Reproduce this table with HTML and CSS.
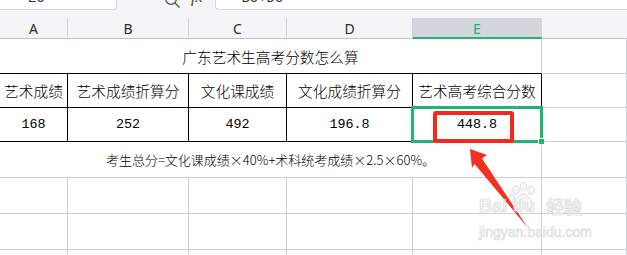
FILE: index.html
```html
<!DOCTYPE html>
<html lang="zh-CN">
<head>
<meta charset="utf-8">
<title>广东艺术生高考分数怎么算</title>
<link rel="stylesheet" href="styles.css">
</head>
<body>
<div class="topbar">
  <div class="namebox"><span>E5</span></div>
  <div class="tools">
    <svg class="search" width="18" height="16" viewBox="0 0 18 16"><circle cx="7" cy="7" r="5.3" fill="none" stroke="#555" stroke-width="1.3"/><line x1="11" y1="11" x2="15" y2="15" stroke="#555" stroke-width="1.4" stroke-linecap="round"/></svg>
    <span class="fx">fx</span>
  </div>
  <div class="formula"><span>=B5+D5</span></div>
</div>
<div class="colheads">
  <div class="ch">A</div>
  <div class="ch">B</div>
  <div class="ch">C</div>
  <div class="ch">D</div>
  <div class="ch sel">E</div>
  <div class="ch end"></div>
</div>
<div class="sheet">
  <div class="c title">广东艺术生高考分数怎么算</div>
  <div class="c"></div>

  <div class="c t">艺术成绩</div>
  <div class="c t">艺术成绩折算分</div>
  <div class="c t">文化课成绩</div>
  <div class="c t">文化成绩折算分</div>
  <div class="c t">艺术高考综合分数</div>
  <div class="c"></div>

  <div class="c t num">168</div>
  <div class="c t num">252</div>
  <div class="c t num">492</div>
  <div class="c t num">196.8</div>
  <div class="c t num">448.8</div>
  <div class="c"></div>

  <div class="c note">考生总分=文化课成绩×40%+术科统考成绩×2.5×60%。</div>
  <div class="c"></div>

  <div class="c"></div><div class="c"></div><div class="c"></div><div class="c"></div><div class="c"></div><div class="c"></div>
  <div class="c"></div><div class="c"></div><div class="c"></div><div class="c"></div><div class="c"></div><div class="c"></div>
  <div class="c"></div><div class="c"></div><div class="c"></div><div class="c"></div><div class="c"></div><div class="c"></div>
</div>

<div class="selbox"></div>
<div class="handle"></div>
<div class="redbox"></div>
<svg class="arrow" width="627" height="255" viewBox="0 0 627 255"><polygon points="470,149 487,155 482,158.5 528,228 474.5,164 472,168" fill="#f4311f"/></svg>

<div class="watermark">
  <div class="wm-top">
    <span class="wm-bai">Bai</span>
    <span class="wm-paw">
      <svg width="30" height="32" viewBox="0 0 30 32"><g fill="#f4f4f4" stroke="#d6d6d6" stroke-width="1"><ellipse cx="8" cy="9" rx="3.2" ry="4.2"/><ellipse cx="15.5" cy="5.5" rx="3.2" ry="4.2"/><ellipse cx="23" cy="9" rx="3.2" ry="4.2"/><ellipse cx="4" cy="17" rx="2.8" ry="3.6"/><path d="M15 13 C20 13 25 21 24 25 C23 29 18 28 15 27 C12 28 7 29 6 25 C5 21 10 13 15 13 Z"/></g></svg>
      <span class="wm-du">du</span>
    </span>
    <span class="wm-jy">经验</span>
  </div>
  <div class="wm-url">jingyan.baidu.com</div>
</div>
</body>
</html>
```

FILE: styles.css
```css
html, body {
  margin: 0;
  padding: 0;
  width: 627px;
  height: 255px;
  overflow: hidden;
  background: #fff;
}
body {
  position: relative;
  font-family: "Noto Sans CJK SC", "Noto Sans", sans-serif;
  color: #000;
}

/* formula bar */
.topbar {
  display: flex;
  height: 10px;
  background: #f4f5f7;
}
.namebox {
  width: 117px;
  box-sizing: border-box;
  background: #fff;
  border-right: 1px solid #d5d8de;
  border-bottom: 1px solid #d5d8de;
  border-bottom-right-radius: 4px;
  position: relative;
  overflow: hidden;
}
.namebox span {
  position: absolute;
  left: 28px;
  top: -10px;
  font-family: "Liberation Mono", monospace;
  font-size: 14px;
  line-height: 16px;
  color: #333;
}
.tools {
  width: 98px;
  position: relative;
  overflow: hidden;
}
.search {
  position: absolute;
  left: 47px;
  top: -8px;
}
.fx {
  position: absolute;
  left: 74px;
  top: -11px;
  font-family: "Liberation Serif", serif;
  font-style: italic;
  font-size: 16px;
  line-height: 16px;
  color: #444;
}
.formula {
  flex: 1;
  box-sizing: border-box;
  background: #fff;
  border-left: 1px solid #d5d8de;
  border-bottom: 1px solid #d5d8de;
  border-bottom-left-radius: 4px;
  position: relative;
  overflow: hidden;
}
.formula span {
  position: absolute;
  left: 17px;
  top: -10px;
  font-family: "Liberation Mono", monospace;
  font-size: 14px;
  line-height: 16px;
  color: #333;
}

/* column headers */
.colheads {
  display: grid;
  grid-template-columns: 68px 121px 98px 126px 129px 1fr;
  grid-template-rows: 20px;
  height: 29px;
  box-sizing: border-box;
  padding-top: 8px;
  background: #f4f5f7;
  border-bottom: 1px solid #bfc3cc;
}
.ch {
  position: relative;
  display: flex;
  align-items: center;
  justify-content: center;
  border-right: 1px solid #cdd0d8;
  font-family: "Noto Sans", sans-serif;
  font-size: 14px;
  color: #2b2b2b;
}
.ch.end {
  border-right: none;
}
.ch.sel {
  background: #d3d6dd;
  color: #23b277;
  border-right-color: #d3d6dd;
}
.ch.sel::after {
  content: "";
  position: absolute;
  left: 0;
  right: -1px;
  bottom: -1px;
  height: 2px;
  background: #21b474;
}

/* sheet grid */
.sheet {
  display: grid;
  grid-template-columns: 68px 121px 98px 126px 129px 1fr;
  grid-template-rows: 35px 34px 34px 36px 36px 36px 1fr;
  height: 217px;
}
.c {
  box-sizing: border-box;
  border-right: 1px solid #cbcfda;
  border-bottom: 1px solid #cbcfda;
  display: flex;
  align-items: center;
  justify-content: center;
  font-size: 14.7px;
  font-weight: 300;
  white-space: nowrap;
  overflow: hidden;
}
.title {
  grid-column: span 5;
  border-bottom-color: #000;
  padding-top: 1px;
}
.t {
  border-right-color: #000;
  border-bottom-color: #000;
}
.num {
  font-family: "Liberation Mono", monospace;
  font-weight: 400;
  font-size: 13.4px;
}
.note {
  grid-column: span 5;
  font-size: 13px;
}

/* overlays */
.selbox {
  position: absolute;
  left: 411px;
  top: 106px;
  width: 132px;
  height: 37px;
  box-sizing: border-box;
  border: 3px solid #21b474;
}
.handle {
  position: absolute;
  left: 538px;
  top: 138px;
  width: 7px;
  height: 7px;
  box-sizing: border-box;
  background: #21b474;
  border: 1px solid #fff;
}
.redbox {
  position: absolute;
  left: 433px;
  top: 111px;
  width: 81px;
  height: 32px;
  box-sizing: border-box;
  border: 4px solid #f5281f;
  border-radius: 3px;
}
.arrow {
  position: absolute;
  left: 0;
  top: 0;
}

/* watermark */
.watermark {
  position: absolute;
  left: 479px;
  top: 181px;
  width: 116px;
  opacity: 0.8;
}
.wm-top {
  display: flex;
  align-items: flex-end;
  height: 34px;
}
.wm-bai, .wm-du, .wm-jy {
  font-family: "Liberation Sans", sans-serif;
  font-weight: bold;
  font-size: 18px;
  line-height: 18px;
  color: #f4f4f4;
  -webkit-text-stroke: 0.7px #d2d2d2;
}
.wm-paw {
  position: relative;
  width: 36px;
  height: 34px;
}
.wm-paw svg {
  position: absolute;
  left: 1px;
  top: 0;
}
.wm-du {
  position: absolute;
  left: 6px;
  bottom: 0;
}
.wm-jy {
  font-family: "Noto Sans CJK SC", sans-serif;
  font-size: 18px;
  margin-left: 3px;
}
.wm-url {
  margin-top: 10px;
  font-family: "Liberation Sans", sans-serif;
  font-size: 14px;
  line-height: 14px;
  color: #f4f4f4;
  -webkit-text-stroke: 0.6px #d2d2d2;
}
```
